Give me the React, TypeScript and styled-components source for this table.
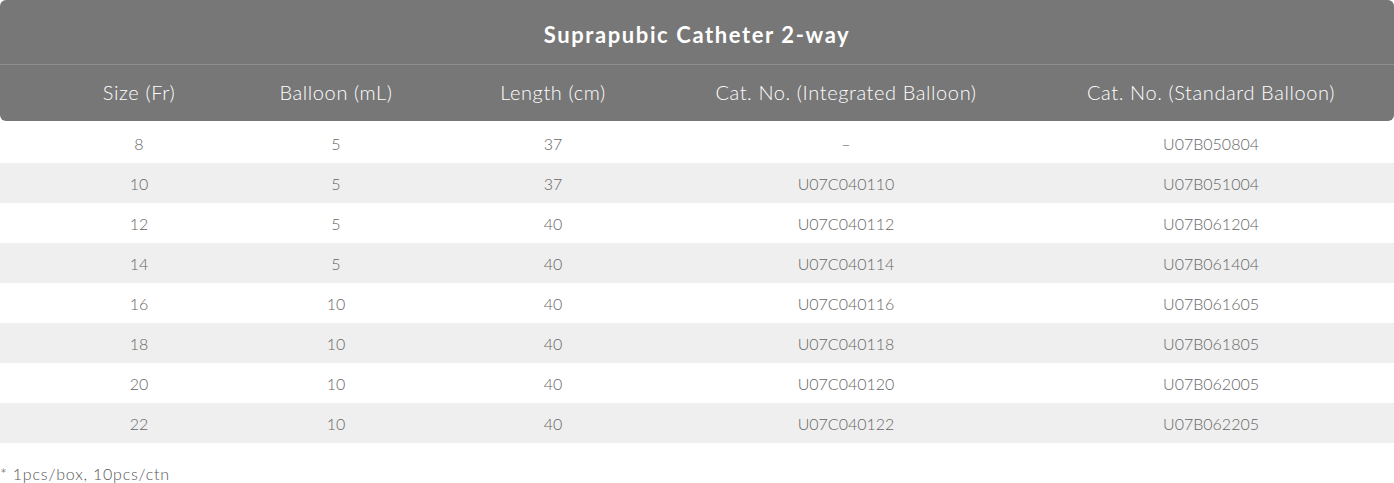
import React from "react";
import styled, { createGlobalStyle } from "styled-components";

const Global = createGlobalStyle`
  html, body { margin: 0; padding: 0; background: #ffffff; }
  body { font-family: Lato, "Open Sans", sans-serif; }
`;

const Wrap = styled.div`
  width: 1394px;
`;

const Head = styled.div`
  background: #777777;
  border-radius: 6px;
  color: #ffffff;
`;

const Title = styled.div`
  height: 65px;
  display: flex;
  align-items: center;
  justify-content: center;
  font-size: 22px;
  font-weight: 700;
  letter-spacing: 1.6px;
  border-bottom: 1px solid #8e8e8e;
  padding-top: 4px;
  box-sizing: border-box;
`;

const Grid = styled.div<{ $h: number }>`
  display: grid;
  grid-template-columns: 182px 212px 222px 364px 366px;
  padding-left: 48px;
  height: ${(p) => p.$h}px;
  align-items: center;
  box-sizing: border-box;
`;

const HeadRow = styled(Grid)`
  font-size: 20px;
  font-weight: 300;
  letter-spacing: 0.6px;
  padding-bottom: 3px;
`;

const Cell = styled.div`
  text-align: center;
  white-space: nowrap;
`;

const Body = styled.div`
  margin-top: 2px;
  border-left: 1px solid #efefef;
  border-right: 1px solid #efefef;
`;

const Row = styled(Grid)<{ $alt: boolean }>`
  background: ${(p) => (p.$alt ? "#efefef" : "#ffffff")};
  color: #666666;
  font-size: 16px;
  font-weight: 300;
  padding-top: 0px;
  margin-left: -1px;
  margin-right: -1px;
`;

const Note = styled.div`
  margin-top: 21px;
  font-size: 16px;
  font-weight: 300;
  letter-spacing: 0.8px;
  color: #555555;
`;

const cols = [
  "Size (Fr)",
  "Balloon (mL)",
  "Length (cm)",
  "Cat. No. (Integrated Balloon)",
  "Cat. No. (Standard Balloon)",
];

const rows: string[][] = [
  ["8", "5", "37", "–", "U07B050804"],
  ["10", "5", "37", "U07C040110", "U07B051004"],
  ["12", "5", "40", "U07C040112", "U07B061204"],
  ["14", "5", "40", "U07C040114", "U07B061404"],
  ["16", "10", "40", "U07C040116", "U07B061605"],
  ["18", "10", "40", "U07C040118", "U07B061805"],
  ["20", "10", "40", "U07C040120", "U07B062005"],
  ["22", "10", "40", "U07C040122", "U07B062205"],
];

export default function App() {
  return (
    <Wrap>
      <Global />
      <Head>
        <Title>Suprapubic Catheter 2-way</Title>
        <HeadRow $h={56}>
          {cols.map((c) => (
            <Cell key={c}>{c}</Cell>
          ))}
        </HeadRow>
      </Head>
      <Body>
        {rows.map((r, i) => (
          <Row key={i} $h={40} $alt={i % 2 === 1}>
            {r.map((c, j) => (
              <Cell key={j}>{c}</Cell>
            ))}
          </Row>
        ))}
      </Body>
      <Note>* 1pcs/box, 10pcs/ctn</Note>
    </Wrap>
  );
}
